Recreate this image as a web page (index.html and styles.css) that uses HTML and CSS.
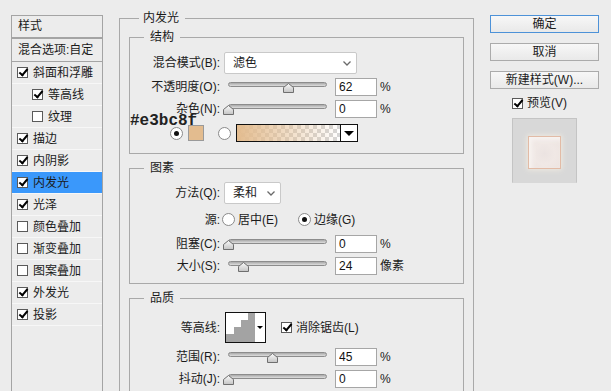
FILE: index.html
```html
<!DOCTYPE html>
<html lang="zh">
<head>
    <meta charset="UTF-8">
    <title>图层样式</title>
    <link rel="stylesheet" href="styles.css">
</head>
<body>
    <div class="styles-list">
        <div class="list-head">样式</div>
        <div class="list-blend">混合选项:自定</div>
        <div class="list-item"><span class="check on"></span>斜面和浮雕</div>
        <div class="list-item sub"><span class="check on"></span>等高线</div>
        <div class="list-item sub"><span class="check"></span>纹理</div>
        <div class="list-item"><span class="check on"></span>描边</div>
        <div class="list-item"><span class="check on"></span>内阴影</div>
        <div class="list-item active"><span class="check on"></span>内发光</div>
        <div class="list-item"><span class="check on"></span>光泽</div>
        <div class="list-item"><span class="check"></span>颜色叠加</div>
        <div class="list-item"><span class="check"></span>渐变叠加</div>
        <div class="list-item"><span class="check"></span>图案叠加</div>
        <div class="list-item"><span class="check on"></span>外发光</div>
        <div class="list-item"><span class="check on"></span>投影</div>
    </div>

    <fieldset class="effect">
        <legend>内发光</legend>

        <fieldset class="section structure">
            <legend>结构</legend>
            <div class="row tall">
                <span class="label">混合模式(B):</span>
                <div class="select wide">滤色<svg class="chevron" width="8" height="5" viewBox="0 0 8 5"><polyline points="0.5,0.5 4,4 7.5,0.5" fill="none" stroke="#6a6a6a" stroke-width="1.3"/></svg></div>
            </div>
            <div class="row">
                <span class="label">不透明度(O):</span>
                <div class="slider"><div class="track"></div><svg class="thumb" style="left: 61%" width="11" height="10" viewBox="0 0 11 10"><defs><linearGradient id="tg" x1="0" y1="0" x2="0" y2="1"><stop offset="0" stop-color="#fafafa"/><stop offset="1" stop-color="#c4c4c4"/></linearGradient></defs><polygon points="0.5,9.5 0.5,4.5 5.5,0.5 10.5,4.5 10.5,9.5" fill="url(#tg)" stroke="#6f6f6f"/></svg></div>
                <input class="num" value="62"><span class="unit">%</span>
            </div>
            <div class="row">
                <span class="label">杂色(N):</span>
                <div class="slider"><div class="track"></div><svg class="thumb" style="left: 0%" width="11" height="10" viewBox="0 0 11 10"><polygon points="0.5,9.5 0.5,4.5 5.5,0.5 10.5,4.5 10.5,9.5" fill="url(#tg)" stroke="#6f6f6f"/></svg></div>
                <input class="num" value="0"><span class="unit">%</span>
            </div>
            <div class="row color-row">
                <span class="hex">#e3bc8f</span>
                <span class="radio on"></span>
                <span class="swatch"></span>
                <span class="radio"></span>
                <div class="gradient"><div class="ramp"></div><div class="drop"><span class="tri"></span></div></div>
            </div>
        </fieldset>

        <fieldset class="section elements">
            <legend>图素</legend>
            <div class="row tall">
                <span class="label">方法(Q):</span>
                <div class="select narrow">柔和<svg class="chevron" width="8" height="5" viewBox="0 0 8 5"><polyline points="0.5,0.5 4,4 7.5,0.5" fill="none" stroke="#6a6a6a" stroke-width="1.3"/></svg></div>
            </div>
            <div class="row source">
                <span class="label">源:</span>
                <span class="radio first"></span><span class="opt">居中(E)</span>
                <span class="radio on gap"></span><span class="opt">边缘(G)</span>
            </div>
            <div class="row">
                <span class="label">阻塞(C):</span>
                <div class="slider"><div class="track"></div><svg class="thumb" style="left: 0%" width="11" height="10" viewBox="0 0 11 10"><polygon points="0.5,9.5 0.5,4.5 5.5,0.5 10.5,4.5 10.5,9.5" fill="url(#tg)" stroke="#6f6f6f"/></svg></div>
                <input class="num" value="0"><span class="unit">%</span>
            </div>
            <div class="row">
                <span class="label">大小(S):</span>
                <div class="slider"><div class="track"></div><svg class="thumb" style="left: 15%" width="11" height="10" viewBox="0 0 11 10"><polygon points="0.5,9.5 0.5,4.5 5.5,0.5 10.5,4.5 10.5,9.5" fill="url(#tg)" stroke="#6f6f6f"/></svg></div>
                <input class="num" value="24"><span class="unit">像素</span>
            </div>
        </fieldset>

        <fieldset class="section quality">
            <legend>品质</legend>
            <div class="row contour-row">
                <span class="label">等高线:</span>
                <div class="contour">
                    <svg width="29" height="29" viewBox="0 0 29 29"><polygon points="0,29 0,21 8,21 8,14 15,14 15,7 22,7 22,0 29,0 29,29" fill="#a3a3a3"/></svg>
                    <div class="contour-drop"><span class="tri small"></span></div>
                </div>
                <span class="check on"></span><span class="opt">消除锯齿(L)</span>
            </div>
            <div class="row range">
                <span class="label">范围(R):</span>
                <div class="slider"><div class="track"></div><svg class="thumb" style="left: 44%" width="11" height="10" viewBox="0 0 11 10"><polygon points="0.5,9.5 0.5,4.5 5.5,0.5 10.5,4.5 10.5,9.5" fill="url(#tg)" stroke="#6f6f6f"/></svg></div>
                <input class="num" value="45"><span class="unit">%</span>
            </div>
            <div class="row">
                <span class="label">抖动(J):</span>
                <div class="slider"><div class="track"></div><svg class="thumb" style="left: 0%" width="11" height="10" viewBox="0 0 11 10"><polygon points="0.5,9.5 0.5,4.5 5.5,0.5 10.5,4.5 10.5,9.5" fill="url(#tg)" stroke="#6f6f6f"/></svg></div>
                <input class="num" value="0"><span class="unit">%</span>
            </div>
        </fieldset>
    </fieldset>

    <div class="actions">
        <div class="btn primary">确定</div>
        <div class="btn">取消</div>
        <div class="btn">新建样式(W)...</div>
        <div class="preview-check"><span class="check on"></span>预览(V)</div>
        <div class="preview"><div class="preview-square"></div></div>
    </div>
</body>
</html>
```

FILE: styles.css
```css
* {
    box-sizing: border-box;
}
body {
    margin: 0;
    height: 391px;
    overflow: hidden;
    display: flex;
    align-items: flex-start;
    padding-left: 11px;
    background-color: #ececec;
    color: #1b1b1b;
    font-family: "Liberation Sans", "Noto Sans CJK SC", sans-serif;
    font-size: 12px;
    line-height: 16px;
}

/* left style list */
.styles-list {
    width: 92px;
    height: 400px;
    margin-top: 15px;
    border: 1px solid #a4a4a4;
    flex-shrink: 0;
}
.list-head {
    height: 22px;
    padding: 2px 0 0 6px;
    border-bottom: 1px solid #a4a4a4;
}
.list-blend {
    height: 24px;
    padding: 3px 0 0 6px;
    border-top: 1px solid #a4a4a4;
    border-bottom: 1px solid #a4a4a4;
}
.list-item {
    height: 22px;
    display: flex;
    align-items: center;
    padding-left: 5px;
    border-bottom: 1px solid #f7f7f7;
}
.list-item.sub {
    padding-left: 20px;
}
.list-item.active {
    background-color: #3a98fb;
}
.list-item .check {
    margin-right: 5px;
}

.check {
    position: relative;
    display: inline-block;
    width: 11px;
    height: 11px;
    background: #fff;
    border: 1px solid #5a5a5a;
    flex-shrink: 0;
}
.check.on::after {
    content: '';
    position: absolute;
    left: 3px;
    top: -1px;
    width: 3px;
    height: 7px;
    border: solid #000;
    border-width: 0 2px 2px 0;
    transform: rotate(40deg);
}

.radio {
    display: inline-flex;
    align-items: center;
    justify-content: center;
    width: 13px;
    height: 13px;
    border-radius: 50%;
    background: #fff;
    border: 1px solid #8a8a8a;
    flex-shrink: 0;
}
.radio.on::after {
    content: '';
    width: 5px;
    height: 5px;
    border-radius: 50%;
    background: #111;
}
.radio.first {
    margin-left: -2px;
}
.radio.gap {
    margin-left: 20px;
}

/* group boxes */
fieldset {
    margin: 0;
    padding: 0;
    border: 1px solid #a9a9a9;
    min-width: 0;
}
legend {
    padding: 0 6px;
    margin-left: 14px;
    line-height: 16px;
}
.effect {
    width: 355px;
    height: 420px;
    margin: 10px 0 0 16px;
    padding: 0 9px;
    flex-shrink: 0;
}
.effect > legend {
    margin-left: 10px;
    padding: 0 6px 0 4px;
}
.section {
    margin-top: 6px;
    padding-top: 2px;
}
.structure {
    margin-top: 3px;
    padding: 3px 0 11px;
}
.elements {
    padding-bottom: 8px;
}
.quality {
    padding-bottom: 30px;
}

.row {
    display: flex;
    align-items: center;
    height: 18px;
    margin-top: 4px;
}
.row.tall {
    height: 22px;
}
.row.source {
    height: 23px;
}
.row.range {
    margin-top: 5px;
}
.label {
    width: 90px;
    margin-right: 4px;
    text-align: right;
    line-height: 12px;
    flex-shrink: 0;
}
.opt {
    margin-left: 3px;
}

.select {
    display: flex;
    align-items: center;
    justify-content: space-between;
    height: 22px;
    padding: 0 5px 0 8px;
    background: #fff;
    border: 1px solid #c9c9c9;
    border-radius: 2px;
}
.select.wide {
    width: 133px;
}
.select.narrow {
    width: 57px;
}

.slider {
    position: relative;
    width: 99px;
    height: 18px;
    margin-left: 4px;
    flex-shrink: 0;
}
.track {
    position: absolute;
    left: 0;
    right: 0;
    top: 4px;
    height: 5px;
    border-radius: 3px;
    border: 1px solid #8c8c8c;
    background: linear-gradient(#a9a9a9, #dedede);
}
.thumb {
    position: absolute;
    top: 5px;
    margin-left: -5px;
}

.num {
    width: 42px;
    height: 18px;
    margin-left: 8px;
    padding: 0 3px;
    border: 1px solid #a6a6a6;
    background: #fff;
    font: inherit;
    color: #111;
}
.unit {
    margin-left: 3px;
}

/* colour row */
.color-row {
    position: relative;
    margin-top: 6px;
    padding-left: 40px;
}
.hex {
    position: absolute;
    left: 0;
    top: -9px;
    font-family: "Liberation Mono", monospace;
    font-weight: bold;
    font-size: 16px;
    line-height: 12px;
    color: #222;
}
.swatch {
    width: 16px;
    height: 16px;
    margin: 0 14px 0 5px;
    background: #e3bc8f;
    border: 1px solid #9a9a9a;
}
.gradient {
    display: flex;
    width: 122px;
    height: 18px;
    margin-left: 5px;
    border: 1px solid #111;
}
.ramp {
    flex: 1;
    background:
        linear-gradient(to right, #e3bc8f, rgba(227, 188, 143, 0)),
        repeating-conic-gradient(#d6d6d6 0 25%, #fff 0 50%) 0 0 / 8px 8px;
}
.drop {
    display: flex;
    align-items: center;
    justify-content: center;
    width: 17px;
    background: #fff;
    border-left: 1px solid #111;
}
.tri {
    width: 0;
    height: 0;
    border-left: 5px solid transparent;
    border-right: 5px solid transparent;
    border-top: 5px solid #000;
}
.tri.small {
    border-left-width: 3px;
    border-right-width: 3px;
    border-top-width: 3px;
}

/* contour */
.contour-row {
    height: 31px;
}
.contour {
    display: flex;
    width: 41px;
    height: 31px;
    margin: 0 15px 0 1px;
    background: #fff;
    border: 1px solid #111;
}
.contour-drop {
    flex: 1;
    display: flex;
    align-items: center;
    justify-content: center;
}
.contour-row .check {
    margin-right: 1px;
}

/* right column */
.actions {
    width: 109px;
    margin: 15px 0 0 16px;
    flex-shrink: 0;
}
.btn {
    height: 18px;
    margin-bottom: 10px;
    text-align: center;
    border: 1px solid #ababab;
    background: linear-gradient(#f7f7f7, #e9e9e9);
}
.btn.primary {
    border-color: #4d92d8;
}
.preview-check {
    display: flex;
    align-items: center;
    gap: 4px;
    margin-top: -4px;
    padding-left: 22px;
}
.preview {
    display: flex;
    align-items: center;
    justify-content: center;
    width: 65px;
    height: 65px;
    margin: 7px 0 0 22px;
    padding-top: 4px;
    background: #d8d8d8;
    border: 1px solid #c4c4c4;
    border-bottom-color: #d8d8d8;
}
.preview-square {
    width: 33px;
    height: 33px;
    border: 1px solid #e2bba6;
    background: radial-gradient(circle at 50% 55%, #ebe3e1 0, #f0e8e5 45%, #ece3df 100%);
    box-shadow: 0 0 5px 1px #efeae0, inset 3px 3px 5px #f8f4f2;
}
```
